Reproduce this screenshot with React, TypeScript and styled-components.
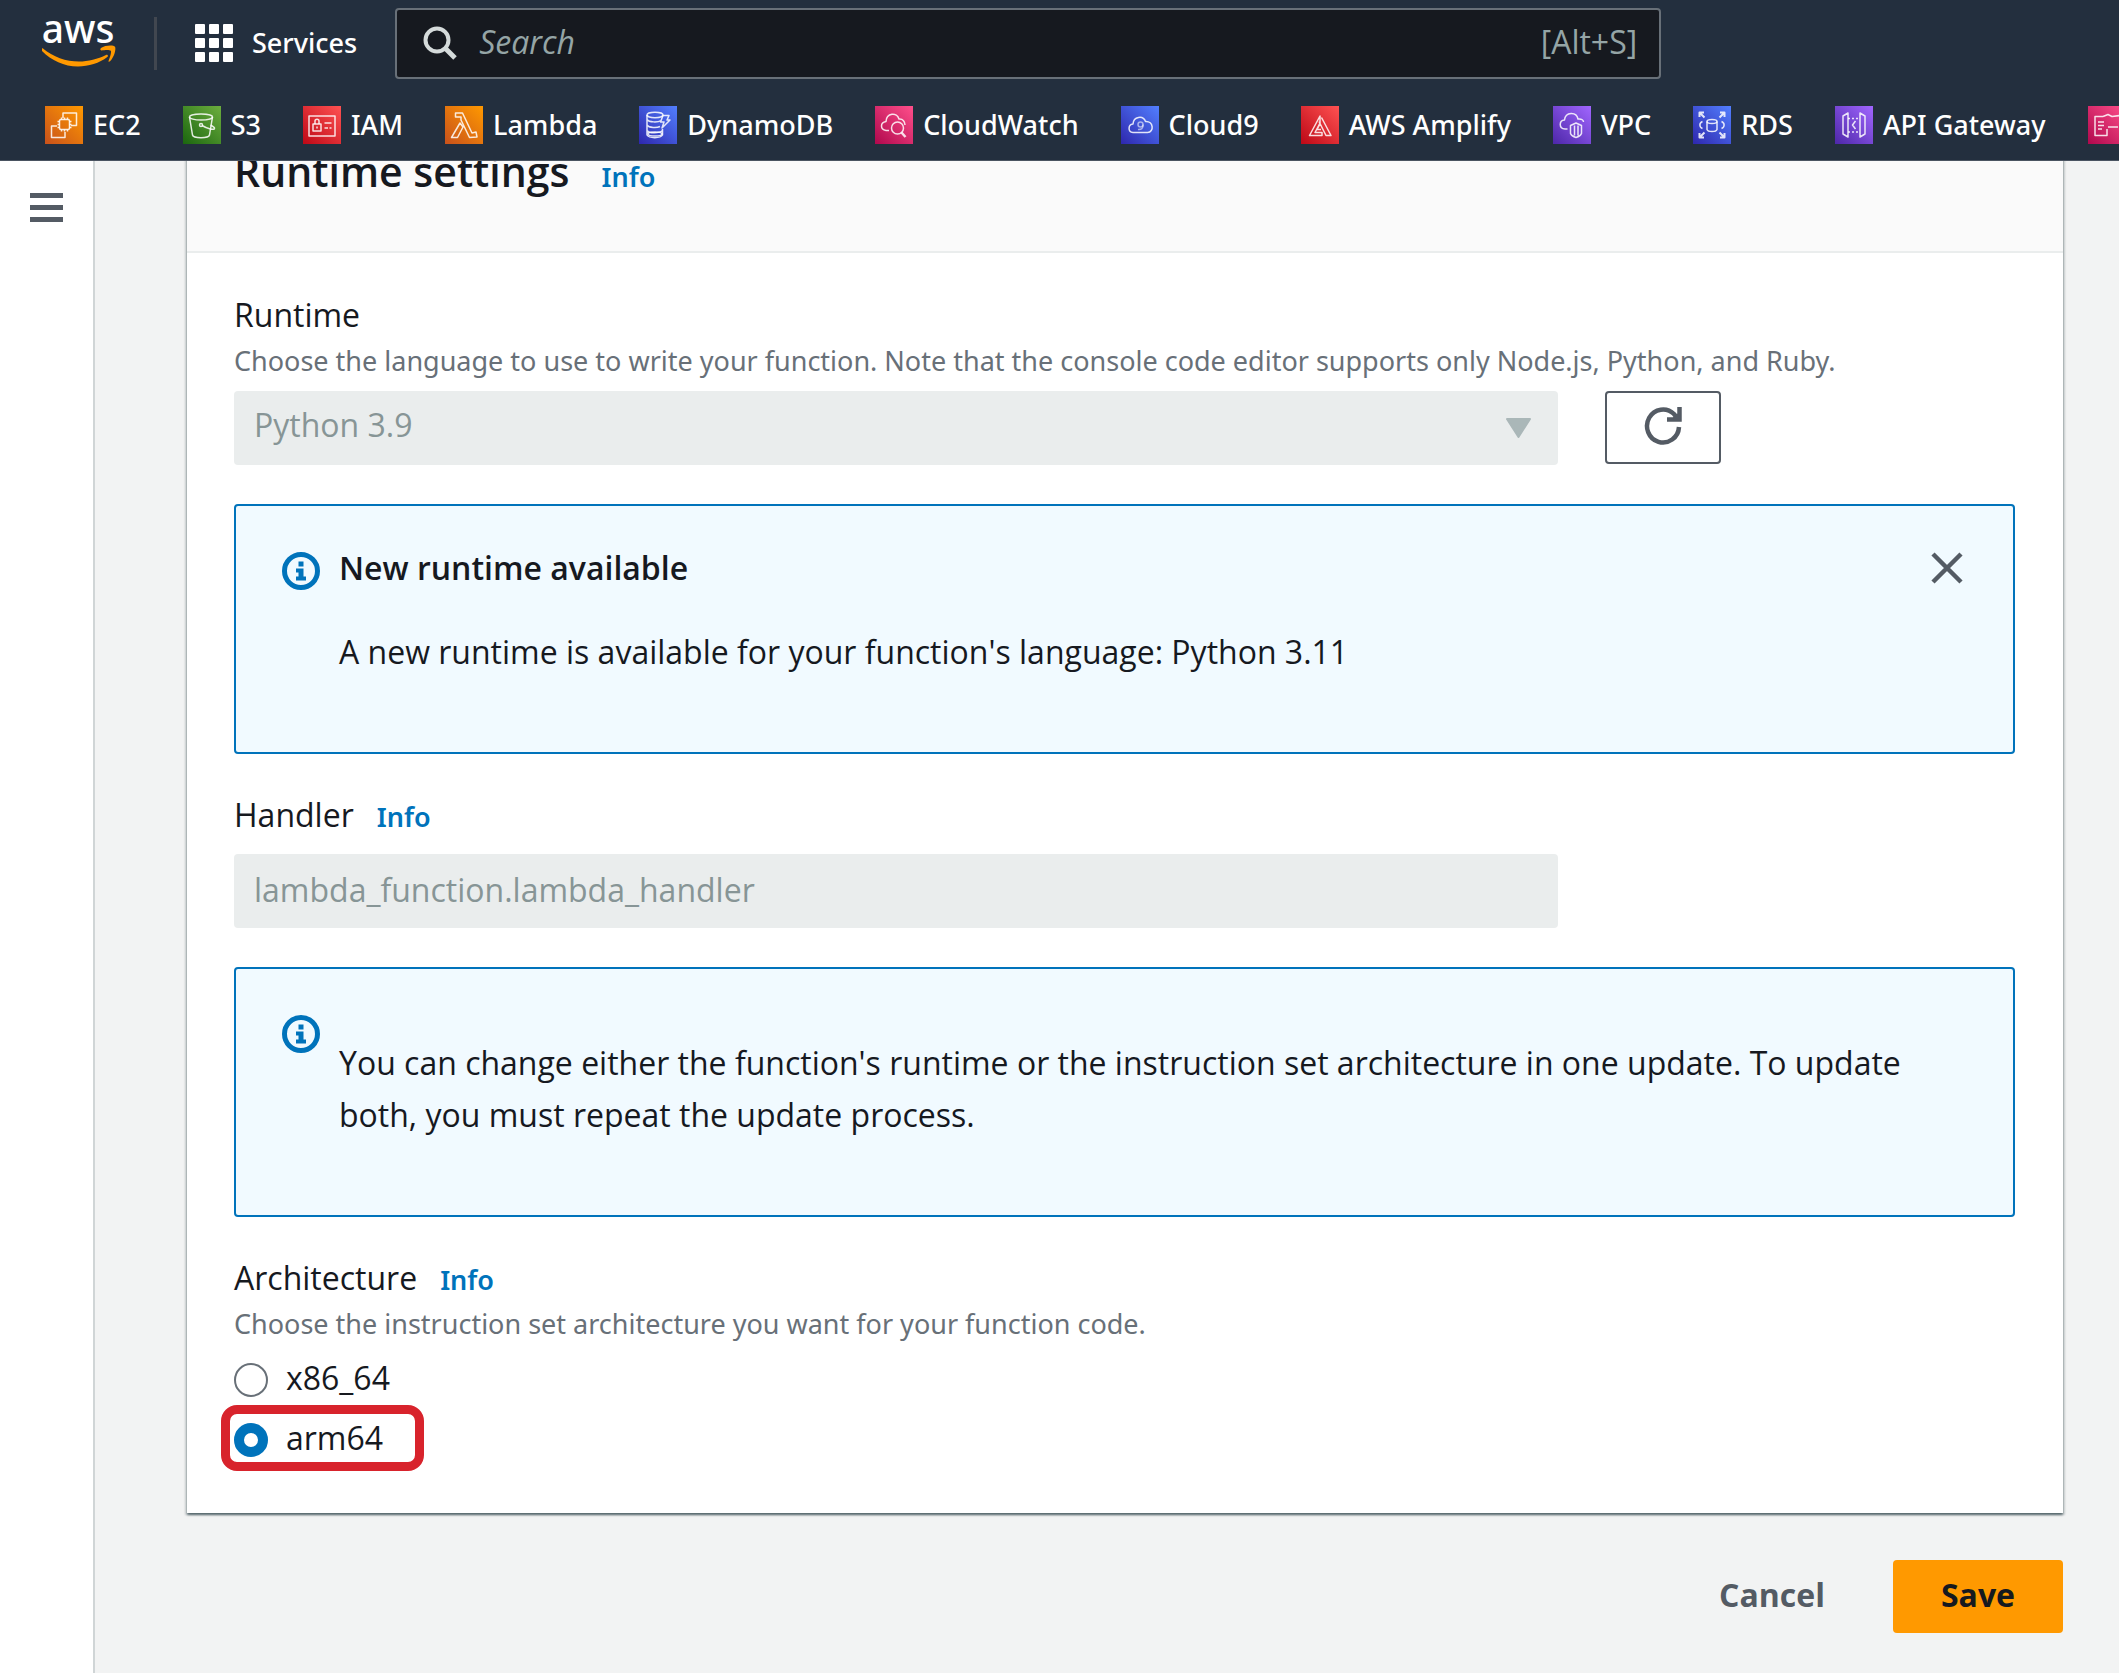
import React, { useState } from 'react';
import styled, { createGlobalStyle, css } from 'styled-components';

const textFont = '"Open Sans", "Noto Sans", sans-serif';
const smallFont = '"Noto Sans", "Open Sans", sans-serif';

const GlobalStyle = createGlobalStyle`
  * { box-sizing: border-box; }
  body {
    margin: 0;
    background: #f2f3f3;
    color: #16191f;
    font: 400 32px/44px ${textFont};
  }
  button, input, select { font: inherit; margin: 0; }
  a { text-decoration: none; }
  svg { display: block; flex: none; }
`;

/* ---------- page frame ---------- */

const Page = styled.div`
  min-height: 100vh;
  display: flex;
  flex-direction: column;
`;

const Header = styled.header`
  position: sticky;
  top: 0;
  z-index: 2;
  background: #232f3e;
  border-bottom: 1px solid #4a5461;
  color: #fff;
`;

const TopBar = styled.div`
  display: flex;
  align-items: center;
  gap: 38px;
  height: 86px;
  padding: 0 42px;
`;

const HomeLink = styled.a`
  display: block;
  color: #fff;
`;

const Divider = styled.span`
  width: 3px;
  height: 53px;
  background: #414750;
`;

const ServicesButton = styled.button`
  display: flex;
  align-items: center;
  gap: 19px;
  padding: 0;
  border: 0;
  background: none;
  color: #fff;
  font: 500 27px/36px ${smallFont};
`;

const SearchBox = styled.label`
  display: flex;
  align-items: center;
  gap: 22px;
  flex: 1;
  max-width: 1266px;
  height: 71px;
  padding: 0 22px 0 26px;
  border: 2px solid #687078;
  border-radius: 4px;
  background: #16191f;
  color: #95a5a6;
`;

const SearchInput = styled.input`
  flex: 1;
  min-width: 0;
  padding: 0 0 3px;
  border: 0;
  outline: 0;
  background: none;
  color: #fff;
  &::placeholder { color: #95a5a6; opacity: 1; font-style: italic; }
`;

const Shortcut = styled.span`
  padding-bottom: 3px;
`;

const Favorites = styled.nav`
  display: flex;
  align-items: center;
  gap: 42px;
  height: 74px;
  padding: 4px 0 0 45px;
  overflow: hidden;
`;

const FavoriteLink = styled.a`
  display: flex;
  align-items: center;
  flex: none;
  gap: 10px;
  color: #fff;
  font: 500 27px/36px ${smallFont};
`;

const Columns = styled.div`
  flex: 1;
  display: flex;
`;

const SideRail = styled.aside`
  flex: none;
  width: 95px;
  padding: 30px 0 0 29px;
  background: #fff;
  border-right: 2px solid #d0d5d6;
`;

const RailButton = styled.button`
  padding: 0;
  border: 0;
  background: none;
  color: #545b64;
`;

/* The page is scrolled a little, so the card starts beneath the header. */
const Main = styled.main`
  flex: 1;
  min-width: 0;
  margin-top: -36px;
  padding: 0 56px 38px 92px;
`;

/* ---------- card ---------- */

const Card = styled.section`
  background: #fff;
  box-shadow: 0 2px 2px rgba(0, 28, 36, 0.5), 2px 2px 2px rgba(0, 28, 36, 0.15), -2px 2px 2px rgba(0, 28, 36, 0.15);
`;

const CardHeader = styled.div`
  display: flex;
  align-items: baseline;
  gap: 32px;
  padding: 22px 48px 56px 47px;
  background: #fafafa;
  border-bottom: 2px solid #eaeded;
`;

const CardTitle = styled.h2`
  margin: 0;
  font-weight: 600;
  font-size: 41px;
  line-height: 48px;
`;

const InfoLink = styled.a`
  color: #0073bb;
  font: 600 27px/36px ${smallFont};
`;

const CardBody = styled.div`
  display: flex;
  flex-direction: column;
  gap: 39px;
  padding: 40px 48px 53px 47px;
`;

const Field = styled.div``;

const LabelRow = styled.div<{ $spaced?: boolean }>`
  display: flex;
  align-items: baseline;
  gap: 23px;
  height: 44px;
  margin-bottom: ${(p) => (p.$spaced ? 17 : 0)}px;
`;

const Hint = styled.p<{ $gap: number }>`
  margin: 0 0 ${(p) => p.$gap}px;
  color: #687078;
  font: 400 27px/48px ${smallFont};
`;

const ControlRow = styled.div`
  display: flex;
  gap: 47px;
`;

const controlLook = css`
  width: 100%;
  height: 74px;
  border: 0;
  border-radius: 4px;
  background: #eaeded;
  color: #879596;
  opacity: 1;
`;

const ControlWrap = styled.div`
  position: relative;
  flex: none;
  width: calc(75% - 12px);
`;

const Select = styled.select`
  ${controlLook}
  appearance: none;
  padding: 0 72px 6px 20px;
`;

const Arrow = styled.svg`
  position: absolute;
  right: 27px;
  top: 27px;
  pointer-events: none;
`;

const TextInput = styled.input`
  ${controlLook}
  padding: 0 20px 4px;
`;

const RefreshButton = styled.button`
  display: flex;
  align-items: center;
  justify-content: center;
  width: 116px;
  height: 73px;
  padding: 0 0 3px;
  border: 2px solid #545b64;
  border-radius: 4px;
  background: #fff;
  color: #545b64;
`;

/* ---------- alert ---------- */

const AlertBox = styled.div`
  display: flex;
  align-items: flex-start;
  gap: 19px;
  padding: 40px 46px 46px;
  border: 2px solid #0073bb;
  border-radius: 4px;
  background: #f1faff;
`;

const AlertIcon = styled.div`
  padding-top: 6px;
  color: #0073bb;
`;

const AlertContent = styled.div`
  flex: 1;
`;

const AlertTitle = styled.h3`
  margin: 0 0 36px;
  font-weight: 600;
  font-size: 32px;
  line-height: 44px;
`;

const AlertText = styled.p`
  margin: 28px 0;
  line-height: 52px;
`;

const CloseButton = styled.button`
  padding: 6px 4px;
  border: 0;
  background: none;
  color: #545b64;
`;

/* ---------- radios ---------- */

const RadioList = styled.div`
  display: flex;
  flex-direction: column;
  align-items: flex-start;
  gap: 16px;
`;

const RadioLabel = styled.label<{ $marked?: boolean }>`
  position: relative;
  display: flex;
  align-items: center;
  gap: 18px;
  ${(p) =>
    p.$marked &&
    css`
      &::after {
        content: '';
        position: absolute;
        inset: -11px -41px -11px -13px;
        border: 9px solid #d8232c;
        border-radius: 16px;
        pointer-events: none;
      }
    `}
`;

const Radio = styled.input`
  appearance: none;
  flex: none;
  width: 34px;
  height: 34px;
  margin-top: 3px;
  border: 2px solid #687078;
  border-radius: 50%;
  background: #fff;
  &:checked { border: 10px solid #0073bb; }
`;

/* ---------- footer actions ---------- */

const Actions = styled.div`
  display: flex;
  justify-content: flex-end;
  gap: 20px;
  margin-top: 47px;
`;

const ActionButton = styled.button<{ $primary?: boolean }>`
  height: 73px;
  padding: 0 48px 4px;
  border: 0;
  border-radius: 4px;
  background: ${(p) => (p.$primary ? '#ff9900' : 'transparent')};
  color: ${(p) => (p.$primary ? '#16191f' : '#545b64')};
  font-weight: 700;
`;

/* ---------- drawings ---------- */

const AwsLogo = () => (
  <svg width="74" height="84" viewBox="0 -12 74 84">
    <text x="36" y="30" textAnchor="middle" fill="#fff" fontFamily="Noto Sans, Open Sans, sans-serif" fontWeight="500" fontSize="39">
      aws
    </text>
    <path d="M1 35.5c10 8.500 23 13 36 13 9 0 19-2.500 27-6.500 1.500-.7 2.700.9 1.300 2C57.500 50 46.500 53.500 36 53.500 22 53.500 9.500 47.500 0 38c-1.500-1.500-.5-3.500 1-2.500z" fill="#ff9900" />
    <path d="M59 35c4-2.800 12.500-3.200 14-1.200 1.200 2-.5 10-5 14.500-1 .8-1.800.4-1.400-.6 1-2.700 3.200-8.500 2.200-9.900-1.100-1.400-6.800-.7-9.200-.4-1.300.1-1.800-1.400-.6-2.400z" fill="#ff9900" />
  </svg>
);

const GridIcon = () => (
  <svg width="38" height="38" viewBox="0 0 38 38" fill="currentColor">
    {[0, 14, 28].map((y) => [0, 14, 28].map((x) => <rect key={`${x}-${y}`} x={x} y={y} width="10" height="10" rx="1" />))}
  </svg>
);

const SearchIcon = () => (
  <svg width="34" height="34" viewBox="0 0 34 34" fill="none" stroke="#d5dbdb" strokeWidth="4">
    <circle cx="14" cy="14" r="11.5" />
    <path d="M22 22l10 10" strokeWidth="5" />
  </svg>
);

const MenuIcon = () => (
  <svg width="34" height="34" viewBox="0 0 34 34" fill="currentColor">
    <path d="M1 2h34v5H1zM1 14h34v5H1zM1 26h34v5H1z" />
  </svg>
);

const RefreshIcon = () => (
  <svg width="38" height="38" viewBox="0 0 38 38" fill="none" stroke="currentColor" strokeWidth="4.5">
    <path d="M35 20a16 16.5 0 1 1-5-13l4 5" />
    <path d="M35.5 0v12.500H23" />
    <path d="M28 12l7-6v6z" fill="currentColor" strokeWidth="1" />
  </svg>
);

const InfoIcon = () => (
  <svg width="38" height="38" viewBox="0 0 38 38">
    <circle cx="19" cy="19" r="16.5" fill="none" stroke="currentColor" strokeWidth="5" />
    <path d="M16.5 9.5h5v5h-5zM14 16.5h7.500v8H24v4H14v-4h2.500v-4H14z" fill="currentColor" />
  </svg>
);

const CloseIcon = () => (
  <svg width="32" height="32" viewBox="0 0 32 32" stroke="currentColor" strokeWidth="4.5">
    <path d="M2 2l28 28M30 2L2 30" />
  </svg>
);

const hues = {
  orange: ['#c8511b', '#ff9900'],
  green: ['#1b660f', '#6cae3e'],
  red: ['#bd0816', '#ff5252'],
  blue: ['#2e27ad', '#527fff'],
  pink: ['#b0084d', '#ff4f8b'],
  purple: ['#4d27a8', '#a166ff'],
};

type Hue = keyof typeof hues;

const Tile = ({ id, hue, children }: { id: string; hue: Hue; children: React.ReactNode }) => (
  <svg width="38" height="38" viewBox="0 0 38 38" fill="none" stroke="#fff" strokeOpacity="0.85" strokeWidth="1.5" strokeLinejoin="round">
    <defs>
      <linearGradient id={`tile-${id}`} x1="0" y1="1" x2="1" y2="0">
        <stop offset="0" stopColor={hues[hue][0]} />
        <stop offset="1" stopColor={hues[hue][1]} />
      </linearGradient>
    </defs>
    <rect width="38" height="38" fill={`url(#tile-${id})`} stroke="none" />
    {children}
  </svg>
);

const favorites: { id: string; name: string; hue: Hue; art: React.ReactNode }[] = [
  {
    id: 'ec2', name: 'EC2', hue: 'orange',
    art: (
      <>
        <path d="M12 20H6.5v11.500H20V26M18 12V7h13.500v12.500H26" />
        <rect x="14.5" y="13.5" width="10" height="10" rx="1.5" />
        <path d="M16.500 11.500v2M19.500 11.500v2M22.500 11.500v2M16.500 23.500v2M19.500 23.500v2M22.500 23.500v2M12.500 15.500h2M12.500 18.500h2M12.500 21.500h2M24.500 15.500h2M24.500 18.500h2M24.500 21.500h2" />
      </>
    ),
  },
  {
    id: 's3', name: 'S3', hue: 'green',
    art: (
      <>
        <ellipse cx="18" cy="11" rx="11.5" ry="3" />
        <path d="M6.500 11l3 18c1 3.500 16 3.500 17 0l3-18" />
        <circle cx="18" cy="19" r="1.5" />
        <path d="M19 19.500c5 3 13 5.500 12.500 2.500-.3-1-2-1.800-4-2.700" />
      </>
    ),
  },
  {
    id: 'iam', name: 'IAM', hue: 'red',
    art: (
      <>
        <rect x="6" y="10" width="26" height="20" />
        <rect x="10" y="18" width="8" height="7" />
        <path d="M12 18v-3c0-2.500 4-2.500 4 0v3M14 20.500v2M21.500 17h7M21.500 22h3.500M26.500 22h2" />
      </>
    ),
  },
  {
    id: 'lambda', name: 'Lambda', hue: 'orange',
    art: <path d="M10.500 7h7l9.500 20 4-1 1 5-7.500.5L16 14v-3h-5.500zM15 17L6.500 31.500h6L18 21z" />,
  },
  {
    id: 'dynamodb', name: 'DynamoDB', hue: 'blue',
    art: (
      <>
        <ellipse cx="16" cy="9" rx="8" ry="2.7" />
        <path d="M8 9v4.500c2 3 11 3 14 1M8 13.500v5.500c2 3 10 3 13 1.500M8 19v5.500c2 3 12 3 15.500 0M8 24.500V29c2 3.500 13.500 3.500 15.500 0v-6M24 9.500h6l-2 4.500h3l-8 8 2-6h-3.500z" />
        <ellipse cx="16" cy="28" rx="7" ry="2" />
      </>
    ),
  },
  {
    id: 'cloudwatch', name: 'CloudWatch', hue: 'pink',
    art: (
      <>
        <path d="M14 24.500h-3c-6-1-6-8 0-9 .5-9 11-9.500 13-2.500 4-.5 6 3 6 6" />
        <circle cx="22.5" cy="22" r="6" />
        <path d="M26.500 26.500l4 4.500" strokeWidth="2.5" />
      </>
    ),
  },
  {
    id: 'cloud9', name: 'Cloud9', hue: 'blue',
    art: (
      <>
        <path d="M12 26.500c-5.500-.5-5-8 0-8.500.5-7.500 10-9 12.500-2.500 8-.5 9 10.500 2 11z" />
        <circle cx="19.5" cy="18.5" r="2.5" strokeOpacity="0.55" />
        <path d="M22 18.500c.5 4-2 5.500-5 5" strokeOpacity="0.55" />
      </>
    ),
  },
  {
    id: 'amplify', name: 'AWS Amplify', hue: 'red',
    art: <path d="M19 10L8.500 29.500H21v-3h-7l5-9.500zM20.500 11.500l9.500 18h-5L18 15.500M19 18l-3 5.500h4" />,
  },
  {
    id: 'vpc', name: 'VPC', hue: 'purple',
    art: (
      <>
        <path d="M14.500 23H12c-6.500-.5-6-8.500-.5-9 1-8.500 12-8.500 13.500-1 4-.5 5.500 1.500 5.500 3" />
        <path d="M17.500 19.500l5.500-2.500 5.500 2.500v8c-1 2.500-3.500 3.500-5.500 4-2-.5-4.500-1.500-5.500-4zM21.500 19.500v10M25 19.500v10" />
      </>
    ),
  },
  {
    id: 'rds', name: 'RDS', hue: 'blue',
    art: (
      <>
        <path d="M6.500 11v-4.500h4.500M7 7l4.500 4.500M27 6.500h4.500v4.500M31 7l-4.500 4.500M6.500 27v4.500h4.500M7 31l4.500-4.500M27 31.500h4.500v-4.500M31 31l-4.500-4.500" strokeWidth="2" />
        <ellipse cx="19" cy="15.5" rx="5" ry="2" />
        <path d="M14 15.500v8c1 2.700 9 2.700 10 0v-8M9.500 15.500c-3.500 1.500-3.500 5.500 0 7M28.500 15.500c3.500 1.500 3.500 5.500 0 7" />
      </>
    ),
  },
  {
    id: 'apigateway', name: 'API Gateway', hue: 'purple',
    art: (
      <>
        <path d="M13 7l-5 3v18l5 3zM25 7l5 3v18l-5 3zM20.500 15l-3 4 3 4" />
        <path d="M13 12.500h12M13 26h12" strokeDasharray="2 2" />
      </>
    ),
  },
  {
    id: 'codesuite', name: 'CodeStar', hue: 'pink',
    art: <path d="M15 10.500H7v19h12V23M10 16h6M10 19.500h6M10 23h4M15 10.500l5-2 4 2 8-1M20 21h10" />,
  },
];

/* ---------- composed parts ---------- */

const Alert = ({ title, children, closable }: { title?: string; children: React.ReactNode; closable?: boolean }) => (
  <AlertBox role="status">
    <AlertIcon><InfoIcon /></AlertIcon>
    <AlertContent>
      {title && <AlertTitle>{title}</AlertTitle>}
      <AlertText>{children}</AlertText>
    </AlertContent>
    {closable && <CloseButton type="button" aria-label="Dismiss"><CloseIcon /></CloseButton>}
  </AlertBox>
);

const architectures = ['x86_64', 'arm64'];

export default function App() {
  const [architecture, setArchitecture] = useState('arm64');

  return (
    <Page>
      <GlobalStyle />
      <Header>
        <TopBar>
          <HomeLink href="#" aria-label="AWS home"><AwsLogo /></HomeLink>
          <Divider />
          <ServicesButton type="button"><GridIcon />Services</ServicesButton>
          <SearchBox>
            <SearchIcon />
            <SearchInput type="text" placeholder="Search" aria-label="Search" />
            <Shortcut>[Alt+S]</Shortcut>
          </SearchBox>
        </TopBar>
        <Favorites aria-label="Favorites">
          {favorites.map((f) => (
            <FavoriteLink key={f.id} href="#" aria-label={f.name}>
              <Tile id={f.id} hue={f.hue}>{f.art}</Tile>
              {f.id !== 'codesuite' && f.name}
            </FavoriteLink>
          ))}
        </Favorites>
      </Header>

      <Columns>
        <SideRail>
          <RailButton type="button" aria-label="Open navigation"><MenuIcon /></RailButton>
        </SideRail>
        <Main>
          <Card>
            <CardHeader>
              <CardTitle>Runtime settings</CardTitle>
              <InfoLink href="#">Info</InfoLink>
            </CardHeader>
            <CardBody>
              <Field>
                <LabelRow><label htmlFor="runtime">Runtime</label></LabelRow>
                <Hint $gap={6}>
                  Choose the language to use to write your function. Note that the console code editor supports only Node.js, Python, and Ruby.
                </Hint>
                <ControlRow>
                  <ControlWrap>
                    <Select id="runtime" disabled defaultValue="Python 3.9">
                      <option>Python 3.9</option>
                    </Select>
                    <Arrow width="25" height="20" viewBox="0 0 25 20">
                      <path d="M1 1h23L12.500 19z" fill="#aab7b8" stroke="#aab7b8" strokeWidth="2" strokeLinejoin="round" />
                    </Arrow>
                  </ControlWrap>
                  <RefreshButton type="button" aria-label="Refresh runtimes"><RefreshIcon /></RefreshButton>
                </ControlRow>
              </Field>

              <Alert title="New runtime available" closable>
                A new runtime is available for your function's language: Python 3.11
              </Alert>

              <Field>
                <LabelRow $spaced>
                  <label htmlFor="handler">Handler</label>
                  <InfoLink href="#">Info</InfoLink>
                </LabelRow>
                <ControlWrap>
                  <TextInput id="handler" type="text" disabled defaultValue="lambda_function.lambda_handler" />
                </ControlWrap>
              </Field>

              <Alert>
                You can change either the function's runtime or the instruction set architecture in one update. To update both, you must repeat the update process.
              </Alert>

              <Field role="radiogroup" aria-labelledby="architecture">
                <LabelRow>
                  <span id="architecture">Architecture</span>
                  <InfoLink href="#">Info</InfoLink>
                </LabelRow>
                <Hint $gap={8}>Choose the instruction set architecture you want for your function code.</Hint>
                <RadioList>
                  {architectures.map((name) => (
                    <RadioLabel key={name} $marked={name === 'arm64'}>
                      <Radio
                        type="radio"
                        name="architecture"
                        value={name}
                        checked={architecture === name}
                        onChange={() => setArchitecture(name)}
                      />
                      {name}
                    </RadioLabel>
                  ))}
                </RadioList>
              </Field>
            </CardBody>
          </Card>
          <Actions>
            <ActionButton type="button">Cancel</ActionButton>
            <ActionButton type="submit" $primary>Save</ActionButton>
          </Actions>
        </Main>
      </Columns>
    </Page>
  );
}
